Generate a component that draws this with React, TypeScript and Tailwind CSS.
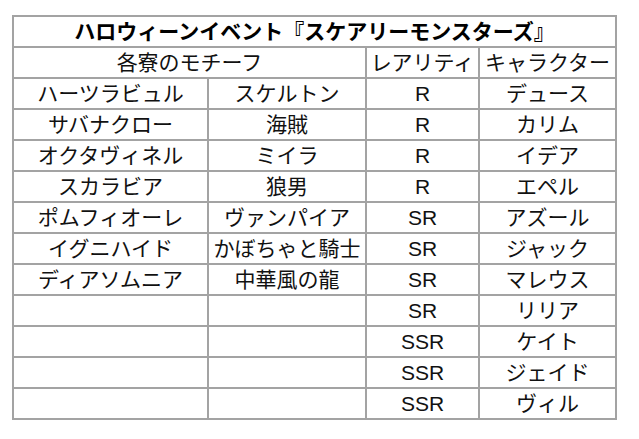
const rows: [string, string, string, string][] = [
  ['ハーツラビュル', 'スケルトン', 'R', 'デュース'],
  ['サバナクロー', '海賊', 'R', 'カリム'],
  ['オクタヴィネル', 'ミイラ', 'R', 'イデア'],
  ['スカラビア', '狼男', 'R', 'エペル'],
  ['ポムフィオーレ', 'ヴァンパイア', 'SR', 'アズール'],
  ['イグニハイド', 'かぼちゃと騎士', 'SR', 'ジャック'],
  ['ディアソムニア', '中華風の龍', 'SR', 'マレウス'],
  ['', '', 'SR', 'リリア'],
  ['', '', 'SSR', 'ケイト'],
  ['', '', 'SSR', 'ジェイド'],
  ['', '', 'SSR', 'ヴィル'],
]

const cell = 'h-[31px] border-2 border-[#a3a3a3] p-0 text-center align-middle leading-none'

export default function App() {
  return (
    <div className="min-h-screen bg-white pl-[12px] pt-[15px] font-['Liberation_Sans','Noto_Sans_CJK_JP',sans-serif] text-[21px] text-[#111]">
      <table className="w-[603px] table-fixed border-collapse">
        <colgroup>
          <col className="w-[195px]" />
          <col className="w-[158px]" />
          <col className="w-[113px]" />
          <col className="w-[137px]" />
        </colgroup>
        <tbody>
          <tr>
            <td colSpan={4} className={`${cell} font-bold text-black`}>
              ハロウィーンイベント『スケアリーモンスターズ』
            </td>
          </tr>
          <tr>
            <td colSpan={2} className={cell}>各寮のモチーフ</td>
            <td className={cell}>レアリティ</td>
            <td className={cell}>キャラクター</td>
          </tr>
          {rows.map((row, i) => (
            <tr key={i}>
              {row.map((text, j) => (
                <td key={j} className={cell}>{text}</td>
              ))}
            </tr>
          ))}
        </tbody>
      </table>
    </div>
  )
}
